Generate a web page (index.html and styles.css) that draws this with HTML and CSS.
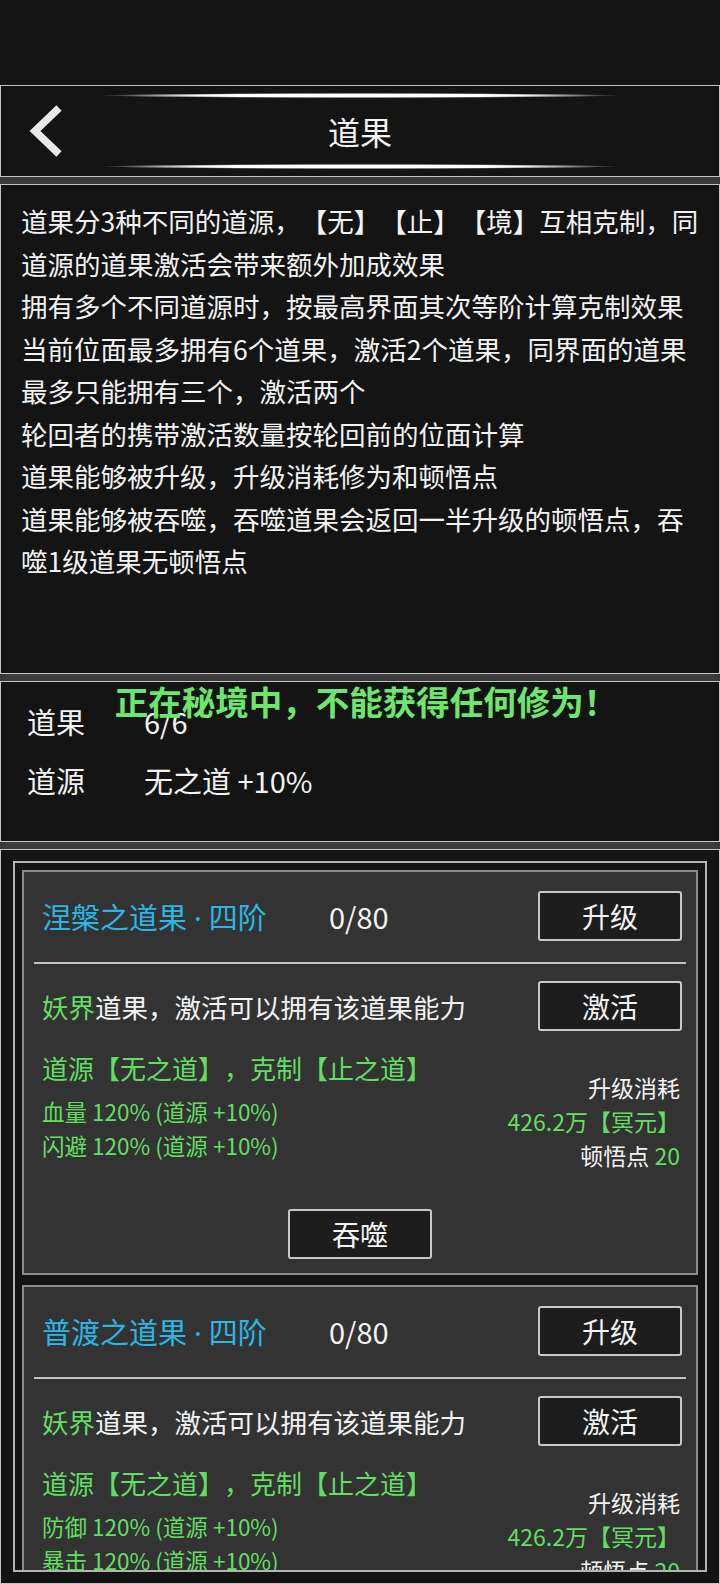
FILE: index.html
```html
<!DOCTYPE html>
<html lang="zh-CN">
<head>
  <meta charset="UTF-8" />
  <meta name="viewport" content="width=device-width, initial-scale=1.0" />
  <title>道果</title>
  <link rel="stylesheet" href="styles.css">
</head>
<body>

  <div class="status"></div>

  <div class="page">

    <!-- TOP BAR -->
    <header class="panel topbar">
      <span class="glow"></span>
      <div class="topbar-main">
        <a class="back" href="#">
          <svg width="36" height="54" viewBox="0 0 36 54"><polyline points="31,4 7,27 31,50" fill="none" stroke="#e8e8e8" stroke-width="7.5" /></svg>
        </a>
        <h1>道果</h1>
        <span></span>
      </div>
      <span class="glow"></span>
    </header>

    <!-- RULES -->
    <section class="panel intro">
      <p>道果分3种不同的道源，【无】【止】【境】互相克制，同<br>道源的道果激活会带来额外加成效果</p>
      <p>拥有多个不同道源时，按最高界面其次等阶计算克制效果</p>
      <p>当前位面最多拥有6个道果，激活2个道果，同界面的道果<br>最多只能拥有三个，激活两个</p>
      <p>轮回者的携带激活数量按轮回前的位面计算</p>
      <p>道果能够被升级，升级消耗修为和顿悟点</p>
      <p>道果能够被吞噬，吞噬道果会返回一半升级的顿悟点，吞<br>噬1级道果无顿悟点</p>
    </section>

    <!-- SUMMARY -->
    <section class="panel stats">
      <div class="notice">正在秘境中，不能获得任何修为！</div>
      <div class="stat-row"><span class="stat-label">道果</span><span>6/6</span></div>
      <div class="stat-row"><span class="stat-label">道源</span><span>无之道 +10%</span></div>
    </section>

    <!-- LIST -->
    <section class="panel list">
      <div class="list-frame">

        <div class="card">
          <div class="card-row">
            <span class="card-title">涅槃之道果<span class="dot">·</span>四阶</span>
            <span class="card-count">0/80</span>
            <button class="btn">升级</button>
          </div>
          <div class="divider"></div>
          <div class="card-row">
            <span class="card-desc"><span class="green">妖界</span>道果，激活可以拥有该道果能力</span>
            <button class="btn">激活</button>
          </div>
          <div class="card-row card-detail">
            <div class="detail-left">
              <div class="source green">道源【无之道】，克制【止之道】</div>
              <div class="attr green">血量 120% (道源 +10%)</div>
              <div class="attr green">闪避 120% (道源 +10%)</div>
            </div>
            <div class="detail-right">
              <div>升级消耗</div>
              <div class="green">426.2万【冥元】</div>
              <div>顿悟点 <span class="green">20</span></div>
            </div>
          </div>
          <div class="card-foot">
            <button class="btn">吞噬</button>
          </div>
        </div>

        <div class="card">
          <div class="card-row">
            <span class="card-title">普渡之道果<span class="dot">·</span>四阶</span>
            <span class="card-count">0/80</span>
            <button class="btn">升级</button>
          </div>
          <div class="divider"></div>
          <div class="card-row">
            <span class="card-desc"><span class="green">妖界</span>道果，激活可以拥有该道果能力</span>
            <button class="btn">激活</button>
          </div>
          <div class="card-row card-detail">
            <div class="detail-left">
              <div class="source green">道源【无之道】，克制【止之道】</div>
              <div class="attr green">防御 120% (道源 +10%)</div>
              <div class="attr green">暴击 120% (道源 +10%)</div>
            </div>
            <div class="detail-right">
              <div>升级消耗</div>
              <div class="green">426.2万【冥元】</div>
              <div>顿悟点 <span class="green">20</span></div>
            </div>
          </div>
          <div class="card-foot">
            <button class="btn">吞噬</button>
          </div>
        </div>

      </div>
    </section>

  </div>

</body>
</html>
```

FILE: styles.css
```css
/* RESET */
*, *::before, *::after {
  box-sizing: border-box;
  margin: 0;
  padding: 0;
}

html, body {
  height: 1584px;
  overflow: hidden;
}

body {
  font-family: "Noto Sans CJK SC", "Noto Sans", sans-serif;
  background-color: #3a3a3a;
  color: #f2f2f2;
  text-spacing-trim: space-all;
}

a {
  color: inherit;
  text-decoration: none;
}

.green {
  color: #62de62;
}

.status {
  height: 85px;
  background-color: #141414;
}

.page {
  display: flex;
  flex-direction: column;
  gap: 7px;
}

.panel {
  background-color: #141414;
  border: 1px solid #c4c4c4;
}

/* TOP BAR */
.topbar {
  height: 92px;
  padding: 7px 0;
  display: flex;
  flex-direction: column;
}

.glow {
  display: block;
  width: 520px;
  height: 5px;
  margin: 0 auto;
  background: radial-gradient(closest-side, #fff 62%, rgba(255, 255, 255, 0));
}

.topbar-main {
  flex: 1;
  display: grid;
  grid-template-columns: 1fr auto 1fr;
  align-items: center;
}

.back {
  display: flex;
  padding-left: 27px;
}

.topbar h1 {
  font-size: 32px;
  font-weight: 400;
  line-height: 1;
}

/* RULES */
.intro {
  height: 490px;
  padding: 15px 8px 0 20px;
  font-size: 26.5px;
  line-height: 42.5px;
}

/* SUMMARY */
.stats {
  position: relative;
  height: 161px;
  padding: 10px 26px 0;
  font-size: 29px;
}

.stat-row {
  display: flex;
  line-height: 59px;
}

.stat-label {
  width: 117px;
}

.notice {
  position: absolute;
  top: 0;
  left: 0;
  right: 0;
  padding-left: 12px;
  text-align: center;
  font-size: 33.5px;
  font-weight: 700;
  line-height: 38px;
  color: #6ee66e;
}

/* LIST */
.list {
  height: 735px;
  padding: 11px 12px 11px;
}

.list-frame {
  height: 100%;
  border: 2px solid #b4b4b4;
  padding: 7px;
  overflow: hidden;
  display: flex;
  flex-direction: column;
  gap: 10px;
}

.card {
  flex-shrink: 0;
  background-color: #333;
  border: 2px solid #8c8c8c;
  padding: 19px 10px 14px;
}

.card-row {
  display: flex;
  align-items: center;
  padding: 0 4px 0 8px;
}

.card-title {
  width: 287px;
  font-size: 29px;
  color: #2bb6e6;
}

.card-title .dot {
  font-family: "Noto Sans", sans-serif;
  margin: 0 7px;
}

.card-count {
  font-size: 29px;
}

.card-desc {
  font-size: 26.5px;
}

.btn {
  width: 144px;
  height: 50px;
  margin-left: auto;
  background-color: #1d1d1d;
  border: 2px solid #c8c8c8;
  border-radius: 3px;
  color: #f2f2f2;
  font-family: inherit;
  font-size: 28px;
}

.divider {
  height: 2px;
  margin: 21px 0 17px;
  background-color: #c4c4c4;
}

.card-detail {
  align-items: flex-start;
  margin-top: 19px;
}

.source {
  font-size: 26px;
  line-height: 36px;
}

.attr {
  font-size: 22.5px;
  line-height: 34px;
}

.source + .attr {
  margin-top: 8px;
}

.detail-right {
  margin-left: auto;
  margin-top: 20px;
  padding-right: 2px;
  text-align: right;
  font-size: 23px;
  line-height: 34px;
}

.card-foot {
  display: flex;
  justify-content: center;
  margin-top: 37px;
}

.card-foot .btn {
  margin-left: 0;
}
```
